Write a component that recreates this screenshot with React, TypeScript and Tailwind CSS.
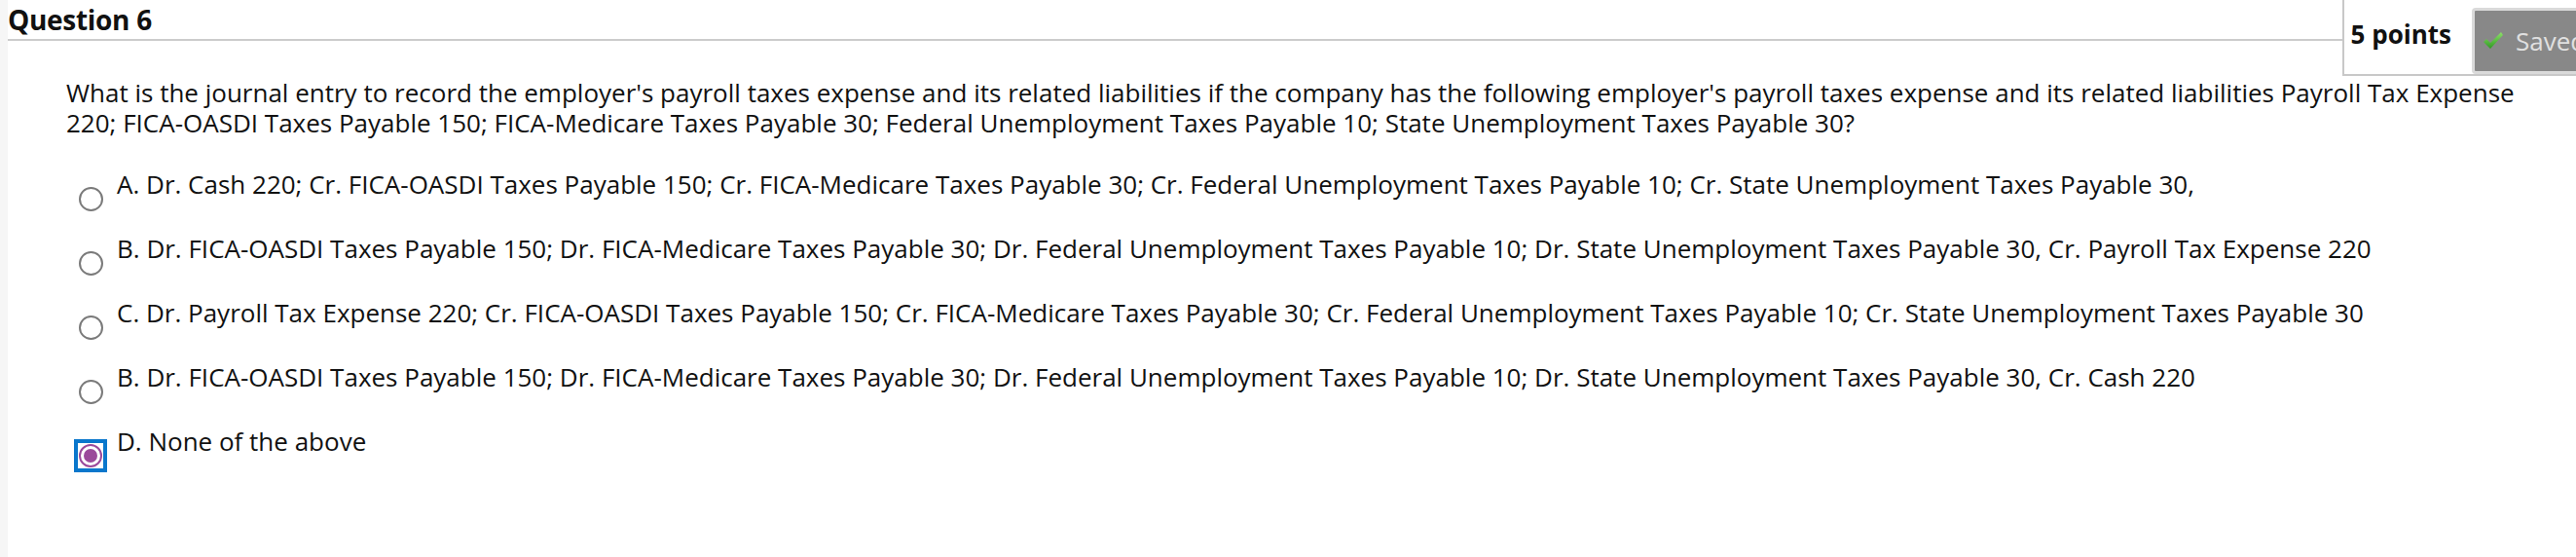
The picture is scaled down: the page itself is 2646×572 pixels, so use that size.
import React from 'react';

const options = [
  { id: 'a', text: 'A. Dr. Cash 220; Cr. FICA-OASDI Taxes Payable 150; Cr. FICA-Medicare Taxes Payable 30; Cr. Federal Unemployment Taxes Payable 10; Cr. State Unemployment Taxes Payable 30,' },
  { id: 'b', text: 'B. Dr. FICA-OASDI Taxes Payable 150; Dr. FICA-Medicare Taxes Payable 30; Dr. Federal Unemployment Taxes Payable 10; Dr. State Unemployment Taxes Payable 30, Cr. Payroll Tax Expense 220' },
  { id: 'c', text: 'C. Dr. Payroll Tax Expense 220; Cr. FICA-OASDI Taxes Payable 150; Cr. FICA-Medicare Taxes Payable 30; Cr. Federal Unemployment Taxes Payable 10; Cr. State Unemployment Taxes Payable 30' },
  { id: 'b2', text: 'B. Dr. FICA-OASDI Taxes Payable 150; Dr. FICA-Medicare Taxes Payable 30; Dr. Federal Unemployment Taxes Payable 10; Dr. State Unemployment Taxes Payable 30, Cr. Cash 220' },
  { id: 'd', text: 'D. None of the above' },
];

const Radio: React.FC<{ checked: boolean }> = ({ checked }) => {
  if (checked) {
    return (
      <div className="w-[34px] h-[34px] border-[4px] border-[#0a77cc] bg-white flex items-center justify-center">
        <div className="w-[24px] h-[24px] rounded-full border-[2px] border-[#9b4a9b] flex items-center justify-center">
          <div className="w-[14px] h-[14px] rounded-full bg-[#9b4a9b]" />
        </div>
      </div>
    );
  }
  return (
    <div className="w-[34px] h-[34px] flex items-center justify-center">
      <div className="w-[25px] h-[25px] rounded-full border-[2px] border-[#7a7a7a] bg-white" />
    </div>
  );
};

export default function App() {
  const selected = 'd';

  return (
    <div className="flex min-h-[572px] bg-white text-[#111] overflow-hidden" style={{ fontFamily: '"Open Sans", "Liberation Sans", sans-serif' }}>
      <div className="w-[8px] shrink-0 bg-[#f6f6f6]" />
      <div className="flex-1 min-w-0">
        {/* Header */}
        <div className="flex items-start">
          <h2 className="flex-1 min-w-0 h-[42px] border-b-2 border-[#cccccc] text-[28px] font-bold leading-[40px] whitespace-nowrap tracking-[-0.3px]">
            Question 6
          </h2>
          <div className="shrink-0 h-[78px] mr-[-43px] border-l-2 border-b-2 border-[#c8c8c8] flex items-start pl-[7px] pt-[8px] gap-[21px]">
            <span className="mt-[9px] text-[26px] font-bold leading-[36px] whitespace-nowrap">5 points</span>
            <div className="w-[150px] h-[68px] border-[3px] border-[#dadada] bg-[#888888] rounded-[4px] flex items-center pl-[8px] gap-[12px] text-[#e0e0e0] text-[26px]">
              <svg width="22" height="20" viewBox="0 0 22 20">
                <defs>
                  <linearGradient id="chk" x1="0" y1="0" x2="0" y2="1">
                    <stop offset="0" stopColor="#8ee06a" />
                    <stop offset="1" stopColor="#2f9a22" />
                  </linearGradient>
                </defs>
                <path d="M1 11 L4 8 L8 12 L19 1 L21 4 L8 18 Z" fill="url(#chk)" />
              </svg>
              <span>Saved</span>
            </div>
          </div>
        </div>

        {/* Question */}
        <p className="pl-[60px] pr-[46px] text-[26px] leading-[31px] mt-[2px]">
          What is the journal entry to record the employer's payroll taxes expense and its related liabilities if the company has the following employer's payroll taxes expense and its related liabilities Payroll Tax Expense 220; FICA-OASDI Taxes Payable 150; FICA-Medicare Taxes Payable 30; Federal Unemployment Taxes Payable 10; State Unemployment Taxes Payable 30?
        </p>

        {/* Options */}
        <div className="mt-[31px] flex flex-col gap-[18px]">
          {options.map((o) => (
            <div key={o.id} className="flex items-start pl-[68px]">
              <div className="mt-[14px] shrink-0">
                <Radio checked={o.id === selected} />
              </div>
              <span className="ml-[10px] text-[26px] leading-[32px]">{o.text}</span>
            </div>
          ))}
        </div>
      </div>
    </div>
  );
}
